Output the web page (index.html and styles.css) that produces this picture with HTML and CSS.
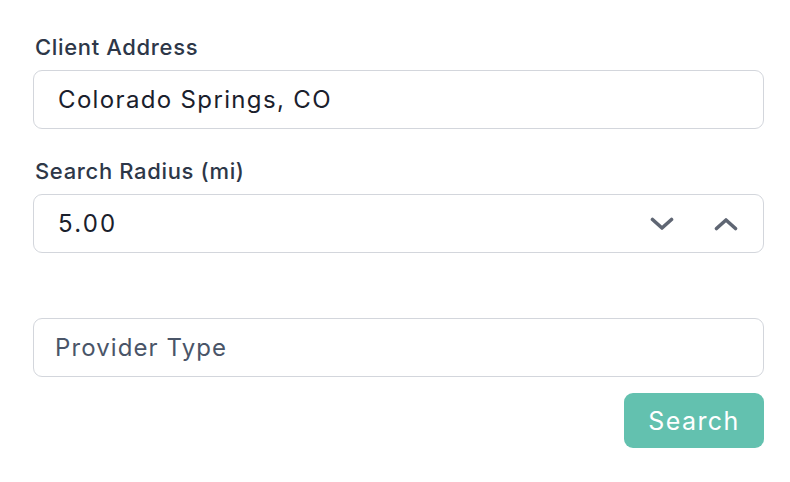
FILE: index.html
```html
<!DOCTYPE html>
<html>
<head>
<meta charset="utf-8">
<link rel="stylesheet" href="styles.css">
</head>
<body>
<form class="form">
  <div class="field">
    <label class="label">Client Address</label>
    <div class="input"><span class="value">Colorado Springs, CO</span></div>
  </div>
  <div class="field">
    <label class="label">Search Radius (mi)</label>
    <div class="input number">
      <span class="value digits">5.00</span>
      <div class="steppers">
        <svg class="chev" width="24" height="14" viewBox="0 0 24 14"><path d="M2.5 2.5 L12 11 L21.5 2.5" fill="none" stroke="#5f6673" stroke-width="3.6" stroke-linecap="round" stroke-linejoin="round"/></svg>
        <svg class="chev" width="24" height="14" viewBox="0 0 24 14"><path d="M2.5 11.5 L12 3 L21.5 11.5" fill="none" stroke="#5f6673" stroke-width="3.6" stroke-linecap="round" stroke-linejoin="round"/></svg>
      </div>
    </div>
  </div>
  <div class="field last">
    <div class="label empty"></div>
    <div class="input"><span class="placeholder">Provider Type</span></div>
  </div>
  <div class="actions">
    <button type="button" class="btn">Search</button>
  </div>
</form>
</body>
</html>
```
FILE: styles.css
```css
html, body {
  margin: 0;
  padding: 0;
  background: #ffffff;
  font-family: Inter, "Noto Sans", sans-serif;
}
.form {
  padding: 31px 26px 0 33px;
  display: flex;
  flex-direction: column;
}
.field {
  display: flex;
  flex-direction: column;
  margin-bottom: 26px;
}
.field.last { margin-bottom: 16px; }
.label {
  font-size: 22px;
  font-weight: 500;
  letter-spacing: 0.65px;
  color: #2d3748;
  line-height: 32px;
  height: 32px;
  margin-bottom: 7px;
  padding-left: 2px;
}
.input {
  box-sizing: border-box;
  height: 59px;
  border: 1.5px solid #d3d6dc;
  border-radius: 9px;
  display: flex;
  align-items: center;
  padding-left: 24px;
  padding-right: 24px;
  font-size: 24px;
  letter-spacing: 1.35px;
}
.input .value { color: #1a202c; }
.input .digits { letter-spacing: 2.2px; }
.input .placeholder { color: #4a5568; margin-left: -3px; letter-spacing: 1.1px; }
.number { justify-content: space-between; padding-right: 25px; }
.steppers {
  display: flex;
  align-items: center;
  gap: 40px;
  margin-top: 1px;
}
.chev { display: block; }
.actions {
  display: flex;
  justify-content: flex-end;
}
.btn {
  height: 55px;
  width: 140px;
  border: none;
  border-radius: 9px;
  background: #63c1af;
  color: #ffffff;
  font-family: Inter, "Noto Sans", sans-serif;
  font-size: 25px;
  font-weight: 400;
  letter-spacing: 1.4px;
  padding: 0;
}
```
